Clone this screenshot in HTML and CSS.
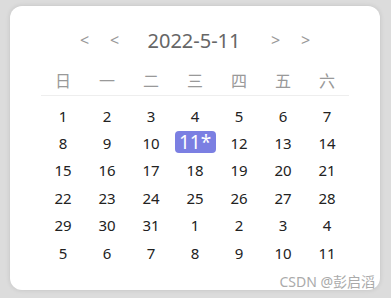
FILE: index.html
```html
<!doctype html>
<html lang="zh-CN">

<head>
  <meta charset="UTF-8" />
  <title>日历</title>
  <link rel="stylesheet" href="styles.css">
</head>

<body>
  <div class="calendar">
    <div class="header">
      <span class="arrow">&lt;</span>
      <span class="arrow">&lt;</span>
      <span class="title">2022-5-11</span>
      <span class="arrow">&gt;</span>
      <span class="arrow">&gt;</span>
    </div>

    <div class="week">
      <span>日</span><span>一</span><span>二</span><span>三</span><span>四</span><span>五</span><span>六</span>
    </div>

    <div class="days">
      <span>1</span><span>2</span><span>3</span><span>4</span><span>5</span><span>6</span><span>7</span>
      <span>8</span><span>9</span><span>10</span><span><i class="today">11*</i></span><span>12</span><span>13</span><span>14</span>
      <span>15</span><span>16</span><span>17</span><span>18</span><span>19</span><span>20</span><span>21</span>
      <span>22</span><span>23</span><span>24</span><span>25</span><span>26</span><span>27</span><span>28</span>
      <span>29</span><span>30</span><span>31</span><span>1</span><span>2</span><span>3</span><span>4</span>
      <span>5</span><span>6</span><span>7</span><span>8</span><span>9</span><span>10</span><span>11</span>
    </div>

    <div class="watermark">CSDN @彭启滔</div>
  </div>
</body>

</html>
```

FILE: styles.css
```css
* {
  margin: 0;
  padding: 0;
  box-sizing: border-box;
  font-family: 'Segoe UI', 'Noto Sans', 'Noto Sans CJK SC', sans-serif;
}

body {
  background: #dcdcdc;
  height: 100vh;
  padding: 6px 11px 8px 10px;
}

.calendar {
  position: relative;
  height: 284px;
  background: #fff;
  border-radius: 12px;
  box-shadow: 0 0 5px rgba(0, 0, 0, 0.12);
  padding-top: 19px;
}

.header {
  display: flex;
  justify-content: center;
  align-items: center;
  height: 30px;
}

.arrow {
  width: 20px;
  text-align: center;
  font-size: 16px;
  color: #999;
  margin: 0 5px;
}

.title {
  font-size: 20px;
  color: #666;
  margin: 0 20px 0 18px;
}

.week,
.days {
  width: 308px;
  margin: 0 auto;
  display: grid;
  grid-template-columns: repeat(7, 1fr);
  text-align: center;
}

.week {
  margin-top: 12px;
  height: 29px;
  line-height: 28px;
  font-size: 16px;
  color: #999;
  border-bottom: 1px solid #eee;
}

.days {
  margin-top: 6px;
  grid-auto-rows: 27.4px;
  align-items: center;
  font-size: 15px;
  color: #222;
}

.today {
  display: inline-block;
  font-style: normal;
  width: 41px;
  height: 22px;
  line-height: 22px;
  border-radius: 4px;
  background: #7b7fe2;
  color: #fff;
  font-size: 19px;
  margin-top: -4px;
}

.watermark {
  position: absolute;
  right: 5px;
  bottom: -1px;
  font-size: 14px;
  color: #aaa;
}
```
